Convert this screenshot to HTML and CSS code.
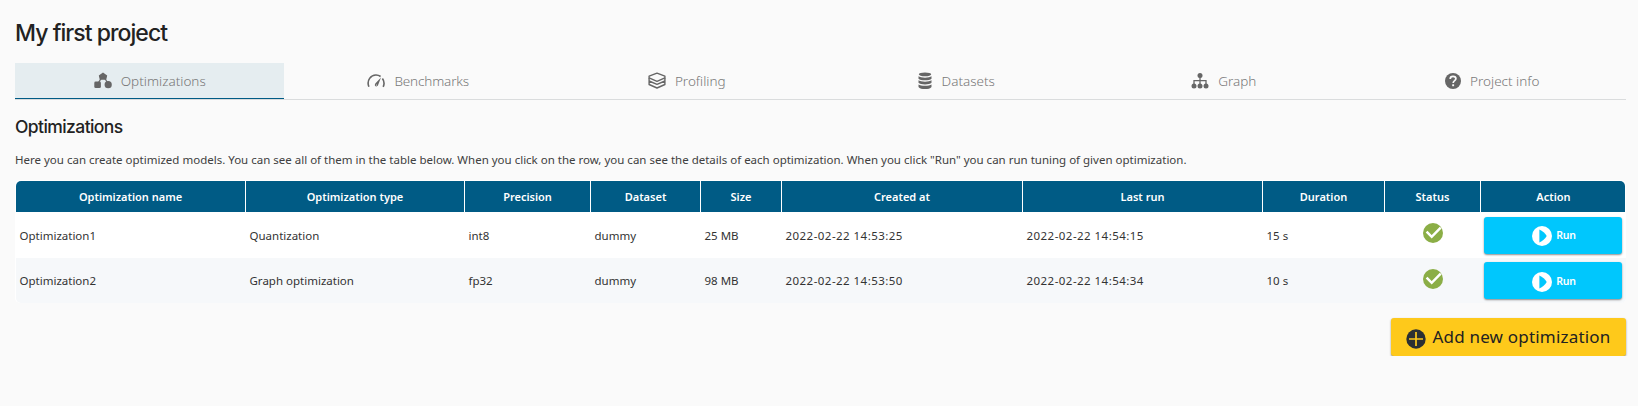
FILE: index.html
```html
<!DOCTYPE html>
<html lang="en">
<head>
<meta charset="utf-8">
<title>My first project</title>
<link rel="stylesheet" href="styles.css">
</head>
<body>
<svg class="sprite" width="0" height="0">
  <symbol id="check" viewBox="0 0 20 20"><circle cx="10" cy="10" r="10" fill="#8bae46"/><path d="M3.600 8.600l5.100 5.200 9-9.200" fill="none" stroke="#fff" stroke-width="2.500"/></symbol>
  <symbol id="play" viewBox="0 0 20 20"><circle cx="10" cy="10" r="10" fill="#fff"/><path d="M7.400 3.600c3 1.400 5.900 3.800 7.300 6.400-1.400 2.600-4.300 5-7.300 6.400z" fill="#00c7fd"/></symbol>
</svg>
<main class="page">
  <h1 class="title">My first project</h1>
  <nav class="tabs">
    <a class="tab active"><svg class="icon" viewBox="0 0 18 18"><g fill="#666"><path d="M9 .6l4.200 2.800-1 4.400H5.800L4.800 3.400z"/><rect x="0.300" y="9.500" width="6.600" height="6.600" rx="1.400"/><circle cx="14.200" cy="12.700" r="3.600"/></g><path d="M7.500 6L4.200 11M10.500 6l3.300 5" stroke="#666" stroke-width="1.300"/></svg><span>Optimizations</span></a>
    <a class="tab bench"><svg class="icon" viewBox="0 0 18 18"><path d="M1.900 14.800C-.8 8.200 4.200 2.900 9 3c1.900 0 3.400.6 4.600 1.500M15.400 6.600c1.800 2.400 2.100 5.400.8 8.200" fill="none" stroke="#666" stroke-width="1.600"/><path d="M14 5.400L11 13.300c-.8 1.900-3.700 1.200-3.100-.8.200-.7.600-1.100 1.100-1.700z" fill="#666"/><circle cx="9.400" cy="13" r=".6" fill="#fafafa"/></svg><span>Benchmarks</span></a>
    <a class="tab"><svg class="icon" viewBox="0 0 18 18"><g fill="none" stroke="#666" stroke-width="1.400" stroke-linejoin="round"><path d="M9 1.200l7.900 3v1.700L9 9.300 1.100 5.900V4.200z"/><path d="M1.100 6v3L9 12.400 16.900 9V6M1.100 9v3.500L9 16l7.900-3.500V9"/></g></svg><span>Profiling</span></a>
    <a class="tab datasets"><svg class="icon data" viewBox="0 0 14 18"><g fill="#666"><ellipse cx="7" cy="2.300" rx="6.200" ry="1.900"/><path d="M.5 4.200c2 1.900 11 1.900 13 0v2.500c-2 2.200-11 2.200-13 0zM.5 8.300c2 1.900 11 1.900 13 0v2.500c-2 2.200-11 2.200-13 0zM.5 12.400c2 1.900 11 1.900 13 0v2.500c-2 2.900-11 2.900-13 0z"/></g></svg><span>Datasets</span></a>
    <a class="tab"><svg class="icon" viewBox="0 0 18 18"><g fill="#666"><circle cx="9" cy="3.500" r="2.500"/><circle cx="3" cy="14" r="2.500"/><circle cx="9" cy="14" r="2.500"/><circle cx="15" cy="14" r="2.500"/></g><path d="M9 4v9M3 13V8.700h12V13" fill="none" stroke="#666" stroke-width="1.300"/></svg><span>Graph</span></a>
    <a class="tab"><svg class="icon help" viewBox="0 0 16 16"><circle cx="8" cy="8" r="8" fill="#666"/><path d="M5.200 6C5.200 4.300 6.400 3.400 8 3.400s2.900.9 2.900 2.400c0 1.900-2.700 1.900-2.700 4.200" fill="none" stroke="#fafafa" stroke-width="1.700"/><rect x="7.200" y="11.300" width="1.900" height="1.900" fill="#fafafa"/></svg><span>Project info</span></a>
  </nav>
  <h2 class="subtitle">Optimizations</h2>
  <p class="intro">Here you can create optimized models. You can see all of them in the table below. When you click on the row, you can see the details of each optimization. When you click "Run" you can run tuning of given optimization.</p>
  <div class="table">
    <div class="row head"><span>Optimization name</span><span>Optimization type</span><span>Precision</span><span>Dataset</span><span>Size</span><span>Created at</span><span>Last run</span><span>Duration</span><span>Status</span><span>Action</span></div>
    <div class="row"><span>Optimization1</span><span>Quantization</span><span>int8</span><span>dummy</span><span>25 MB</span><span class="date">2022-02-22 14:53:25</span><span class="date">2022-02-22 14:54:15</span><span>15 s</span><span class="status"><svg><use href="#check"/></svg></span><span class="action"><button class="run"><svg><use href="#play"/></svg>Run</button></span></div>
    <div class="row even"><span>Optimization2</span><span>Graph optimization</span><span>fp32</span><span>dummy</span><span>98 MB</span><span class="date">2022-02-22 14:53:50</span><span class="date">2022-02-22 14:54:34</span><span>10 s</span><span class="status"><svg><use href="#check"/></svg></span><span class="action"><button class="run"><svg><use href="#play"/></svg>Run</button></span></div>
  </div>
  <button class="add"><svg viewBox="0 0 20 20"><circle cx="10" cy="10" r="9.700" fill="#2b2f33"/><path d="M10 3v14M3 10h14" stroke="#fec91b" stroke-width="1.700"/></svg><span>Add new optimization</span></button>
</main>
</body>
</html>
```
FILE: styles.css
```css
* { box-sizing: border-box; }
body { margin: 0; background: #fafafa; color: #262626; font: 11.5px/18px "Noto Sans", sans-serif; }
.sprite { display: block; position: absolute; }
.page { display: flex; flex-direction: column; padding: 15px 12px 0 15px; }
.title, .subtitle { margin: 0; font-family: Inter, sans-serif; font-weight: 500; color: #222; white-space: nowrap; }
.title { height: 48px; font-size: 23px; line-height: 36px; letter-spacing: -0.95px; }
.tabs { display: grid; grid-template-columns: repeat(6, 1fr); height: 37px; border-bottom: 1px solid #dadcdd; }
.tab { display: flex; align-items: center; justify-content: center; gap: 9px; height: 36px; padding: 1px 0 0 1px; color: #787878; font-size: 13.5px; font-weight: 300; border-bottom: 1px solid transparent; white-space: nowrap; }
.tab.active { background: #e5edf0; border-bottom-color: #005b85; }
.tab.bench { letter-spacing: -0.15px; }
.tab.datasets { padding-left: 3px; }
.icon { width: 18px; height: 18px; flex: none; }
.icon.data { width: 14px; margin-right: 1px; }
.icon.help { width: 16px; height: 16px; }
.subtitle { height: 51px; font-size: 17.5px; line-height: 53px; letter-spacing: -0.58px; }
.intro { margin: 0; height: 29px; line-height: 17px; white-space: nowrap; color: #404040; }
.table { background: #fff; padding: 1px 0 0 1px; border-radius: 5px; width: 1611px; }
.row { display: grid; grid-template-columns: 229px 219px 126px 110px 81px 241px 240px 122px 96px 146px; height: 46px; align-items: center; color: #333; }
.row > span { padding: 2px 0 0 4.500px; white-space: nowrap; }
.row > span:first-child { padding-left: 3.500px; }
.row > .date { letter-spacing: 0.46px; }
.row.head { height: 31px; background: #005b85; border-radius: 5px 5px 0 0; color: #fff; font-size: 11px; font-weight: 600; text-align: center; align-items: stretch; line-height: 32px; margin-right: 1px; }
.row.head > span { padding: 0; border-left: 1px solid #fff; }
.row.head > span:first-child { border-left: 0; }
.row.even { height: 45px; background: #f6f8fa; border-radius: 0 0 5px 5px; }
.row.even > span { padding-top: 0; }
.row > .status, .row.even > .status { display: flex; justify-content: center; padding: 0 0 4px 1px; }
.row > .action { padding: 0 4px; }
.status svg, .run svg { width: 20px; height: 20px; }
.run { display: flex; align-items: center; justify-content: center; gap: 4px; width: 138px; height: 37px; padding: 0 0 0 2px; border: 0; border-radius: 3px; background: #00c7fd; color: #fff; font: 600 10.5px/18px "Noto Sans", sans-serif; letter-spacing: -0.2px; box-shadow: 0 1px 2px rgba(0, 0, 0, .45); }
.run svg { margin-top: 2px; }
.add { align-self: flex-end; display: flex; align-items: center; justify-content: center; gap: 6px; width: 235px; height: 38px; margin-top: 15px; padding: 0; border: 0; border-radius: 3px; background: #fec91b; color: #222; font: 17px/24px "Noto Sans", sans-serif; letter-spacing: 0.2px; white-space: nowrap; box-shadow: 0 1px 2px rgba(0, 0, 0, .45); }
.add svg { width: 20px; height: 20px; margin-top: 3px; }
```
